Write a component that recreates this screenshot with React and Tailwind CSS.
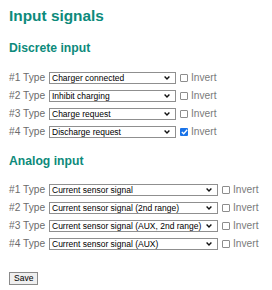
import React from 'react';

const discrete = ['Charger connected', 'Inhibit charging', 'Charge request', 'Discharge request'];
const analog = [
    'Current sensor signal',
    'Current sensor signal (2nd range)',
    'Current sensor signal (AUX, 2nd range)',
    'Current sensor signal (AUX)',
];

function Chevron() {
    return (
        <svg width="6" height="4" viewBox="0 0 6 4" className="shrink-0">
            <path d="M0.6 0.6 L3 3 L5.4 0.6" fill="none" stroke="#111" strokeWidth="1.4" />
        </svg>
    );
}

function Checkbox({ checked }) {
    if (checked) {
        return (
            <span className="flex h-[8px] w-[8px] shrink-0 items-center justify-center rounded-[1px] bg-[#1a73e8]">
                <svg width="7" height="6" viewBox="0 0 7 6">
                    <path d="M0.8 3 L2.7 4.8 L6.2 0.8" fill="none" stroke="#fff" strokeWidth="1.3" />
                </svg>
            </span>
        );
    }
    return <span className="h-[8px] w-[8px] shrink-0 rounded-[1px] border border-[#8d8d8d] bg-white" />;
}

function Row({ n, value, width, checked }) {
    return (
        <div className="flex h-[18px] items-center">
            <span className="w-[40px] text-[10.2px] text-[#6b6b6b]">#{n} Type</span>
            <div
                className="flex h-[12px] items-center justify-between border border-[#8f8f8f] bg-white pl-[2px] pr-[5px]"
                style={{ width }}
            >
                <span className="whitespace-nowrap text-[8.5px] leading-none text-black">{value}</span>
                <Chevron />
            </div>
            <span className="ml-[4px] flex items-center gap-[3px]">
                <Checkbox checked={checked} />
                <span className="text-[10.2px] text-[#7a7a7a]">Invert</span>
            </span>
        </div>
    );
}

export default function App() {
    return (
        <div className="min-h-[290px] w-[272px] bg-white px-[9px] pt-[7px] font-['Liberation_Sans',Arial,sans-serif]">
            <h1 className="text-[15.4px] font-bold leading-[18px] text-[#0d8a7b]">Input signals</h1>

            <h2 className="mt-[16px] text-[12.2px] font-bold leading-[14px] text-[#0d8a7b]">Discrete input</h2>
            <div className="mt-[14px]">
                {discrete.map((d, i) => (
                    <Row key={d} n={i + 1} value={d} width={127} checked={i === 3} />
                ))}
            </div>

            <h2 className="mt-[13px] text-[12.2px] font-bold leading-[14px] text-[#0d8a7b]">Analog input</h2>
            <div className="mt-[13px]">
                {analog.map((d, i) => (
                    <Row key={d} n={i + 1} value={d} width={169} checked={false} />
                ))}
            </div>

            <button className="mt-[19px] h-[13px] border border-[#8a8a8a] bg-[#efefef] px-[4px] text-[8.5px] leading-none text-black">
                Save
            </button>
        </div>
    );
}
